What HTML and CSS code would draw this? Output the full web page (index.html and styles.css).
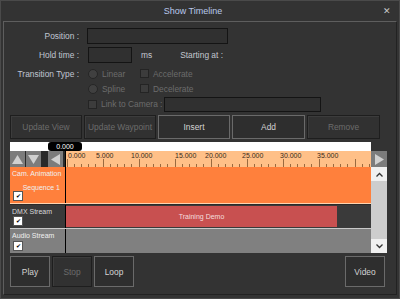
FILE: index.html
```html
<!DOCTYPE html>
<html lang="en">
<head>
    <meta charset="UTF-8">
    <title>Show Timeline</title>
    <link rel="stylesheet" href="styles.css">
</head>
<body>
    <div class="window">
        <div class="titlebar">
            <span class="title">Show Timeline</span>
            <span class="close">&#x2715;</span>
        </div>

        <div class="panel">
            <div class="form">
                <div class="row">
                    <label class="lbl">Position :</label>
                    <div class="field field-pos"></div>
                </div>
                <div class="row">
                    <label class="lbl">Hold time :</label>
                    <div class="field field-hold"></div>
                    <span class="unit">ms</span>
                    <span class="start-lbl">Starting at :</span>
                </div>
                <div class="row row-opt">
                    <label class="lbl">Transition Type :</label>
                    <span class="radio"></span><span class="opt opt-radio">Linear</span>
                    <span class="check"></span><span class="opt">Accelerate</span>
                </div>
                <div class="row row-opt">
                    <span class="lbl"></span>
                    <span class="radio"></span><span class="opt opt-radio">Spline</span>
                    <span class="check"></span><span class="opt">Decelerate</span>
                </div>
                <div class="row">
                    <span class="lbl"></span>
                    <span class="check"></span><span class="opt opt-link">Link to Camera :</span>
                    <div class="field field-cam"></div>
                </div>
            </div>

            <div class="btn-row">
                <button class="btn off">Update View</button>
                <button class="btn off">Update Waypoint</button>
                <button class="btn">Insert</button>
                <button class="btn">Add</button>
                <button class="btn off">Remove</button>
            </div>

            <div class="timeline">
                <div class="cursor-bar">
                    <span class="cursor-pill">0.000</span>
                    <span class="cursor-fill"></span>
                </div>
                <div class="ruler-row">
                    <div class="nav">
                        <span class="nav-btn"><svg width="11" height="9" viewBox="0 0 11 9"><polygon points="5.5,0 11,9 0,9" fill="#d0d0d0"/></svg></span>
                        <span class="nav-btn"><svg width="11" height="9" viewBox="0 0 11 9"><polygon points="0,0 11,0 5.5,9" fill="#d0d0d0"/></svg></span>
                        <span class="nav-gap"></span>
                        <span class="nav-btn"><svg width="9" height="11" viewBox="0 0 9 11"><polygon points="9,0 9,11 0,5.5" fill="#d0d0d0"/></svg></span>
                    </div>
                    <div class="ruler">
                        <svg width="305" height="16" viewBox="0 0 305 16">
                            <g class="ticks" stroke="#9a6a40" stroke-width="1">
                                <path d="M1.5 16V8M8.5 16V13M15.5 16V13M22.5 16V13M29.5 16V13M37.5 16V8M44.5 16V13M51.5 16V13M58.5 16V13M65.5 16V13M73.5 16V8M80.5 16V13M87.5 16V13M94.5 16V13M101.5 16V13M109.5 16V8M116.5 16V13M123.5 16V13M130.5 16V13M137.5 16V13M145.5 16V8M152.5 16V13M159.5 16V13M166.5 16V13M173.5 16V13M181.5 16V8M188.5 16V13M195.5 16V13M202.5 16V13M209.5 16V13M217.5 16V8M224.5 16V13M231.5 16V13M238.5 16V13M245.5 16V13M253.5 16V8M260.5 16V13M267.5 16V13M274.5 16V13M281.5 16V13M289.5 16V8M296.5 16V13M303.5 16V13"/>
                            </g>
                            <g class="ruler-text">
                                <text x="2" y="7">0.000</text>
                                <text x="30" y="7">5.000</text>
                                <text x="65" y="7">10.000</text>
                                <text x="109" y="7">15.000</text>
                                <text x="139" y="7">20.000</text>
                                <text x="176" y="7">25.000</text>
                                <text x="214" y="7">30.000</text>
                                <text x="251" y="7">35.000</text>
                            </g>
                        </svg>
                    </div>
                    <span class="nav-btn nav-right"><svg width="9" height="11" viewBox="0 0 9 11"><polygon points="0,0 9,5.5 0,11" fill="#d0d0d0"/></svg></span>
                </div>
                <div class="tracks-wrap">
                    <div class="tracks">
                        <div class="track track-cam">
                            <div class="track-head">
                                <span class="track-name">Cam. Animation</span>
                                <span class="track-sub">Sequence 1</span>
                                <span class="tick-box">&#x2714;</span>
                            </div>
                            <div class="track-body"></div>
                        </div>
                        <div class="track track-dmx">
                            <div class="track-head">
                                <span class="track-name">DMX Stream</span>
                                <span class="tick-box">&#x2714;</span>
                            </div>
                            <div class="track-body">
                                <div class="clip">Training Demo</div>
                            </div>
                        </div>
                        <div class="track track-audio">
                            <div class="track-head">
                                <span class="track-name">Audio Stream</span>
                                <span class="tick-box">&#x2714;</span>
                            </div>
                            <div class="track-body"></div>
                        </div>
                    </div>
                    <div class="scrollbar">
                        <span class="sb-btn"><svg width="7" height="5" viewBox="0 0 7 5"><path d="M0.5 4.5L3.5 1.5L6.5 4.5" fill="none" stroke="#333" stroke-width="1.3"/></svg></span>
                        <span class="sb-track"></span>
                        <span class="sb-btn"><svg width="7" height="5" viewBox="0 0 7 5"><path d="M0.5 0.5L3.5 3.5L6.5 0.5" fill="none" stroke="#333" stroke-width="1.3"/></svg></span>
                    </div>
                </div>
            </div>

            <div class="transport">
                <button class="btn tbtn">Play</button>
                <button class="btn tbtn off">Stop</button>
                <button class="btn tbtn">Loop</button>
                <span class="spacer"></span>
                <button class="btn tbtn">Video</button>
            </div>
        </div>
    </div>
</body>
</html>
```

FILE: styles.css
```css
body {
    margin: 0;
    background: #1c1c1c;
    font-family: 'Liberation Sans', Arial, sans-serif;
    font-size: 8.4px;
    color: #c4c8d0;
}
.window {
    width: 398px;
    height: 297px;
    border: 1px solid #4a4a4a;
    background: #333333;
    display: flex;
    flex-direction: column;
}
.titlebar {
    height: 20px;
    display: flex;
    align-items: center;
    justify-content: center;
    padding-right: 14px;
    position: relative;
}
.title {
    font-size: 9px;
    color: #b8c8ec;
}
.close {
    position: absolute;
    right: 8px;
    top: 5px;
    font-size: 9px;
    color: #c8c8c8;
}
.panel {
    margin: 0 2px 3px 2px;
    flex: 1;
    border: 1px solid #5e5e5e;
    border-right-color: #222;
    border-bottom-color: #222;
    background: #333333;
    display: flex;
    flex-direction: column;
    padding: 0 8px 0 6px;
    white-space: nowrap;
}
.form {
    padding-top: 6px;
    display: flex;
    flex-direction: column;
}
.row {
    display: flex;
    align-items: center;
    height: 16px;
    margin-bottom: 3px;
}
.row-opt {
    height: 15px;
    margin-bottom: 0;
}
.lbl {
    width: 69px;
    text-align: right;
    margin-right: 8px;
    color: #c0c6d2;
    flex-shrink: 0;
}
.field {
    height: 14px;
    border: 1px solid #141414;
    background: #303030;
}
.field-pos {
    width: 139px;
}
.field-hold {
    width: 42px;
    margin-left: 1px;
}
.unit {
    margin-left: 9px;
}
.start-lbl {
    margin-left: 28px;
}
.radio {
    width: 8px;
    height: 8px;
    border-radius: 50%;
    background: #404040;
    border: 1px solid #262626;
    margin-left: 1px;
}
.check {
    width: 7px;
    height: 7px;
    background: #3c3c3c;
    border: 1px solid #242424;
    margin-left: 1px;
}
.opt {
    color: #6c6c6c;
    margin-left: 4px;
}
.opt-radio {
    width: 37px;
}
.opt-link {
    width: 63px;
}
.field-cam {
    width: 155px;
    height: 13px;
}
.btn-row {
    display: flex;
    gap: 2px;
    margin-top: 0;
    height: 24px;
}
.btn {
    width: 72px;
    height: 24px;
    background: #2e2e2e;
    border: 1px solid #6a6a6a;
    color: #d4d4d4;
    font-family: 'Liberation Sans', Arial, sans-serif;
    font-size: 8.4px;
    padding: 0;
}
.btn.off {
    border-color: #1e1e1e;
    background: #313131;
    color: #6c6c6c;
    box-shadow: inset 1px 1px 0 #3c3c3c;
}
.btn-row .btn:nth-child(4),
.btn-row .btn:nth-child(5) {
    width: 73px;
}
.timeline {
    margin-top: 3px;
    width: 377px;
    display: flex;
    flex-direction: column;
}
.cursor-bar {
    height: 9px;
    display: flex;
    position: relative;
}
.cursor-fill {
    width: 361px;
    background: #ffffff;
}
.cursor-pill {
    position: absolute;
    left: 38px;
    top: 0;
    width: 34px;
    height: 9px;
    background: #000;
    border-radius: 3px;
    color: #fff;
    font-size: 7px;
    line-height: 9px;
    text-align: center;
}
.ruler-row {
    display: flex;
    height: 16px;
}
.nav {
    display: flex;
    gap: 1px;
    width: 55px;
    background: #2a2a2a;
}
.nav-btn {
    width: 15px;
    height: 16px;
    background: #7c7c7c;
    display: flex;
    align-items: center;
    justify-content: center;
}
.nav-gap {
    width: 5px;
}
.ruler {
    width: 305px;
    border-left: 1px solid #000;
    background: #ffc088;
}
.ruler svg {
    display: block;
}
.ruler-text {
    font-family: 'Liberation Sans', Arial, sans-serif;
    font-size: 7px;
    fill: #3a2a1a;
}
.nav-right {
    width: 16px;
}
.tracks-wrap {
    display: flex;
    height: 86px;
}
.tracks {
    width: 361px;
    display: flex;
    flex-direction: column;
}
.track {
    display: flex;
}
.track-head {
    width: 55px;
    position: relative;
    color: #f0f0f0;
    font-size: 7px;
}
.track-body {
    flex: 1;
    border-left: 1px solid #000;
}
.track-name {
    position: absolute;
    left: 2px;
    top: 3px;
}
.track-sub {
    position: absolute;
    right: 5px;
    top: 17px;
}
.tick-box {
    position: absolute;
    left: 3px;
    bottom: 2px;
    width: 8px;
    height: 8px;
    background: #fff;
    border: 1px solid #555;
    color: #000;
    font-size: 6px;
    line-height: 8px;
    text-align: center;
}
.track-cam {
    height: 36px;
    border-bottom: 1px solid #ffd4b0;
}
.track-cam .track-head,
.track-cam .track-body {
    background: #ff803c;
}
.track-dmx {
    height: 23px;
    border-top: 1px solid #2a2a2a;
    border-bottom: 1px solid #c8c8c8;
}
.track-dmx .track-head,
.track-dmx .track-body {
    background: #3a3a3a;
    color: #d8d8d8;
}
.track-dmx .track-body {
    padding: 1px 0;
}
.clip {
    width: 271px;
    height: 21px;
    background: #c85050;
    color: #f4dede;
    font-size: 7px;
    display: flex;
    align-items: center;
    justify-content: center;
}
.track-audio {
    flex: 1;
}
.track-audio .track-head,
.track-audio .track-body {
    background: #808080;
}
.scrollbar {
    width: 16px;
    background: #cdcdcd;
    display: flex;
    flex-direction: column;
}
.sb-btn {
    height: 14px;
    background: #f0f0f0;
    display: flex;
    align-items: center;
    justify-content: center;
}
.sb-track {
    flex: 1;
}
.transport {
    display: flex;
    gap: 2px;
    margin-top: 3px;
    width: 375px;
}
.tbtn {
    width: 40px;
    height: 31px;
}
.spacer {
    flex: 1;
}
```
